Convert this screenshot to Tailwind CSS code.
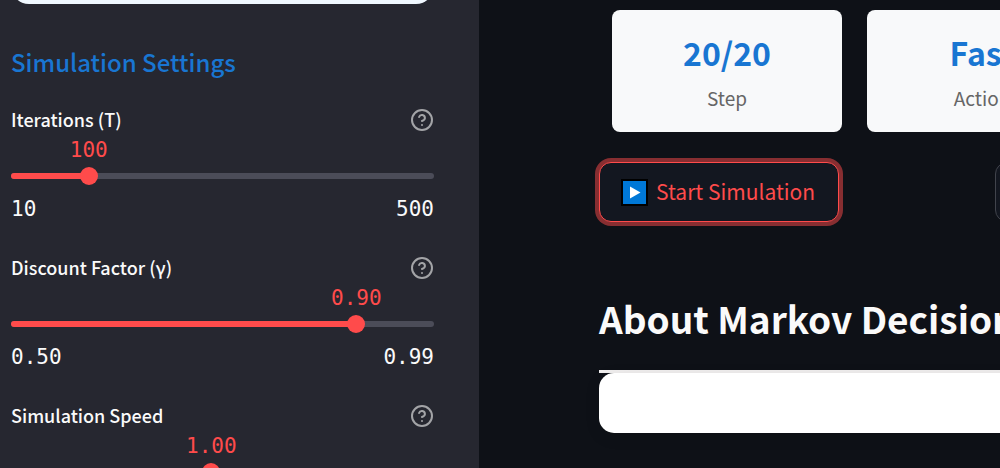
<!DOCTYPE html>
<html lang="en">
<head>
<meta charset="utf-8">
<meta name="viewport" content="width=device-width, initial-scale=1">
<title>Markov Decision Process Simulation</title>
<script src="https://cdn.jsdelivr.net/npm/@tailwindcss/browser@4"></script>
</head>
<body class="flex h-screen overflow-hidden bg-[#0e1117] font-['Noto_Sans_CJK_SC','Noto_Sans',sans-serif] text-[19px] text-[#fafafa]">
<svg class="hidden" aria-hidden="true">
  <symbol id="help" viewBox="0 0 24 24" fill="none" stroke="currentColor" stroke-width="2" stroke-linecap="round" stroke-linejoin="round">
    <circle cx="12" cy="12" r="10"/><path d="M9.09 9a3 3 0 0 1 5.83 1c0 2-3 3-3 3M12 17h.01"/>
  </symbol>
</svg>

<aside class="w-[479px] shrink-0 overflow-hidden bg-[#262730] pr-[45px] pl-[11px]">
  <div class="h-1 overflow-hidden"><div class="-mt-9 h-10 rounded-[18px] bg-[#f0f8ff]"></div></div>
  <h3 class="mt-10 text-2xl leading-9 font-medium text-[#1976d2]">Simulation Settings</h3>

  <section class="mt-6 h-[148px]">
    <div class="flex h-8 items-center justify-between">
      <label for="iterations" class="pb-0.5 text-lg font-medium">Iterations (T)</label>
      <button type="button" aria-label="Help for iterations" class="text-[#a3a4a7]"><svg class="size-6"><use href="#help"/></svg></button>
    </div>
    <div class="relative h-7 font-['DejaVu_Sans_Mono',monospace] text-[21px] leading-7 text-[#ff4b4b]"><output for="iterations" class="absolute -translate-x-1/2" style="left:18.37%">100</output></div>
    <div class="relative flex h-6 items-center">
      <div class="h-1.5 w-full overflow-hidden rounded-full bg-[#4b4c58]"><div class="h-full bg-[#ff4b4b]" style="width:18.37%"></div></div>
      <input id="iterations" type="range" min="10" max="500" step="10" value="100" class="absolute -inset-x-[9px] h-6 appearance-none bg-transparent [&::-webkit-slider-thumb]:size-[18px] [&::-webkit-slider-thumb]:appearance-none [&::-webkit-slider-thumb]:rounded-full [&::-webkit-slider-thumb]:bg-[#ff4b4b]">
    </div>
    <div class="mt-1.5 flex justify-between font-['DejaVu_Sans_Mono',monospace] text-[21px] leading-[30px]"><span>10</span><span>500</span></div>
  </section>

  <section class="h-[148px]">
    <div class="flex h-8 items-center justify-between">
      <label for="discount" class="pb-0.5 text-lg font-medium">Discount Factor (γ)</label>
      <button type="button" aria-label="Help for discount factor" class="text-[#a3a4a7]"><svg class="size-6"><use href="#help"/></svg></button>
    </div>
    <div class="relative h-7 font-['DejaVu_Sans_Mono',monospace] text-[21px] leading-7 text-[#ff4b4b]"><output for="discount" class="absolute -translate-x-1/2" style="left:81.63%">0.90</output></div>
    <div class="relative flex h-6 items-center">
      <div class="h-1.5 w-full overflow-hidden rounded-full bg-[#4b4c58]"><div class="h-full bg-[#ff4b4b]" style="width:81.63%"></div></div>
      <input id="discount" type="range" min="0.5" max="0.99" step="0.01" value="0.9" class="absolute -inset-x-[9px] h-6 appearance-none bg-transparent [&::-webkit-slider-thumb]:size-[18px] [&::-webkit-slider-thumb]:appearance-none [&::-webkit-slider-thumb]:rounded-full [&::-webkit-slider-thumb]:bg-[#ff4b4b]">
    </div>
    <div class="mt-1.5 flex justify-between font-['DejaVu_Sans_Mono',monospace] text-[21px] leading-[30px]"><span>0.50</span><span>0.99</span></div>
  </section>

  <section class="h-[148px]">
    <div class="flex h-8 items-center justify-between">
      <label for="speed" class="pb-0.5 text-lg font-medium">Simulation Speed</label>
      <button type="button" aria-label="Help for simulation speed" class="text-[#a3a4a7]"><svg class="size-6"><use href="#help"/></svg></button>
    </div>
    <div class="relative h-7 font-['DejaVu_Sans_Mono',monospace] text-[21px] leading-7 text-[#ff4b4b]"><output for="speed" class="absolute -translate-x-1/2" style="left:47.37%">1.00</output></div>
    <div class="relative flex h-6 items-center">
      <div class="h-1.5 w-full overflow-hidden rounded-full bg-[#4b4c58]"><div class="h-full bg-[#ff4b4b]" style="width:47.37%"></div></div>
      <input id="speed" type="range" min="0.1" max="2" step="0.1" value="1" class="absolute -inset-x-[9px] h-6 appearance-none bg-transparent [&::-webkit-slider-thumb]:size-[18px] [&::-webkit-slider-thumb]:appearance-none [&::-webkit-slider-thumb]:rounded-full [&::-webkit-slider-thumb]:bg-[#ff4b4b]">
    </div>
  </section>
</aside>

<main class="min-w-0 flex-1 overflow-hidden pt-2.5 pl-[120px]">
  <div class="flex gap-[25px] pl-[13px] text-center">
    <div class="w-[230px] shrink-0 rounded-lg bg-[#f8f9fa] px-5 py-4">
      <div class="text-[32px] leading-[52px] font-bold text-[#1976d2]">20/20</div>
      <div class="pt-0.5 leading-9 text-[#666666]">Step</div>
    </div>
    <div class="w-[230px] shrink-0 rounded-lg bg-[#f8f9fa] px-5 py-4">
      <div class="text-[32px] leading-[52px] font-bold text-[#1976d2]">Fast</div>
      <div class="pt-0.5 leading-9 text-[#666666]">Action</div>
    </div>
  </div>

  <div class="mt-[30px] flex gap-[25px]">
    <div class="w-[371px] shrink-0">
      <button type="button" class="flex h-15 items-center gap-2 rounded-xl border border-[#ff4b4b] bg-[#131720] pr-[23px] pl-[21px] text-[21px] text-[#ff4b4b] ring-4 ring-[#ff4b4b]/50">
        <svg class="size-[27px]" viewBox="0 0 27 27" aria-hidden="true"><path fill="#000" d="M0 0h27v27H0z"/><path fill="#0078d7" d="M2 2h23v23H2z"/><path fill="#fff" d="M9 7.500v12L19.500 13.500z"/></svg>
        <span>Start Simulation</span>
      </button>
    </div>
    <button type="button" aria-label="Reset" class="h-15 w-60 shrink-0 rounded-xl border border-[#41444c] bg-[#131720]"></button>
  </div>

  <h2 class="mt-[66px] text-[37px] leading-[60px] font-bold whitespace-nowrap">About Markov Decision Processes</h2>
  <hr class="mt-[22px] border-t-[3px] border-[#f0eeee]">
  <div class="h-15 w-[1200px] rounded-[15px] bg-white shadow-[0_4px_15px_rgba(0,0,0,0.1)]"></div>
</main>
</body>
</html>
